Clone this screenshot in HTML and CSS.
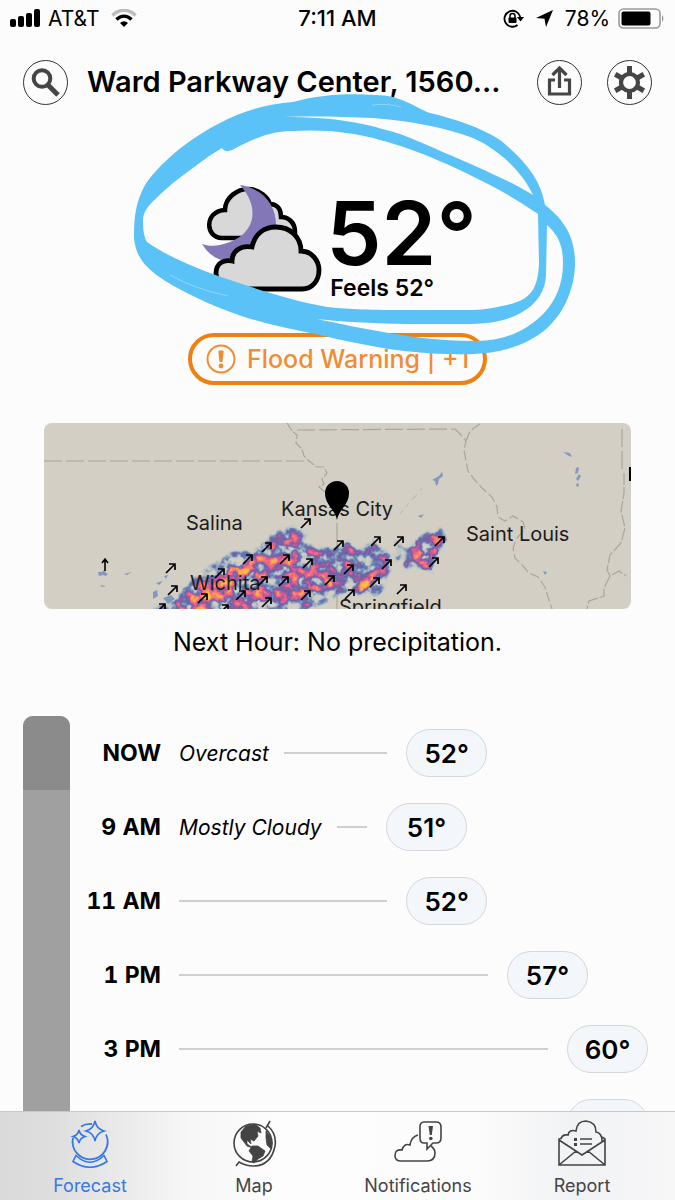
FILE: index.html
```html
<!DOCTYPE html>
<html lang="en">
<head>
<meta charset="utf-8">
<meta name="viewport" content="width=device-width, initial-scale=1">
<title>Forecast</title>
<link rel="stylesheet" href="styles.css">
</head>
<body>
<div class="app">
  <div class="status">
    <div class="status-side">
      <svg class="signal" width="30" height="18" viewBox="0 0 30 18" aria-hidden="true"><rect x="0" y="10" width="6" height="8" rx="2"/><rect x="8" y="7" width="6" height="11" rx="2"/><rect x="16" y="4" width="6" height="14" rx="2"/><rect x="24" y="0" width="6" height="18" rx="2"/></svg>
      <span>AT&amp;T</span>
      <svg class="wifi" width="26" height="18" viewBox="0 0 26 18" aria-hidden="true"><g fill="none" stroke-width="3.4"><path d="M1.5 6.5C8-.3 18-.3 24.500 6.500" stroke="#bbb"/><path d="M5.500 10.500C10 6 16 6 20.500 10.500" stroke="#000"/></g><path d="M9 14Q13 10.500 17 14L13 18Z"/></svg>
    </div>
    <span class="clock">7:11 AM</span>
    <div class="status-side status-right">
      <svg width="21" height="19" viewBox="0 0 21 19" aria-hidden="true"><path d="M14.500 16A8 8 0 1 1 17.300 8" fill="none" stroke="#000" stroke-width="1.800"/><path d="M14 8h7l-3.500 4.500z"/><rect x="5.500" y="8.500" width="8" height="5.500" rx="1"/><path d="M7 9V7a2.500 2.500 0 0 1 5 0v2" fill="none" stroke="#000" stroke-width="1.500"/></svg>
      <svg class="arrow" width="17" height="17" viewBox="0 0 17 17" aria-hidden="true"><path d="M17 0 10 17 8.500 8.800 0 8Z"/></svg>
      <span>78%</span>
      <svg class="battery" width="47" height="21" viewBox="0 0 47 21" aria-hidden="true"><rect x="1" y="1" width="41" height="19" rx="4.500" fill="none" stroke="#999" stroke-width="1.600"/><rect x="3.500" y="3.500" width="29" height="14" rx="2"/><path d="M44 7q3 3.500 0 7z" fill="#999"/></svg>
    </div>
  </div>

  <header class="header">
    <button class="round" aria-label="Search"><svg viewBox="1 1 43 43"><circle cx="19" cy="18.500" r="8.300"/><path d="m25 25 10 10" stroke-width="5"/></svg></button>
    <h1 class="place">Ward Parkway Center, 1560...</h1>
    <div class="actions">
      <button class="round" aria-label="Share"><svg viewBox="1 1 43 43"><path d="M18 20h-5.500v14h20V20H27M22.500 28V8.500M15.500 15l7-7 7 7" stroke-width="3.200"/></svg></button>
      <button class="round" aria-label="Settings"><svg viewBox="1 1 43 43"><circle cx="22.500" cy="22.500" r="8.500" stroke-width="4.200"/><g stroke-width="5"><path d="M22.500 6v7M22.500 32v7"/><path d="M22.500 6v7M22.500 32v7" transform="rotate(60 22.500 22.500)"/><path d="M22.500 6v7M22.500 32v7" transform="rotate(120 22.500 22.500)"/></g></svg></button>
    </div>
  </header>

  <main class="content">
    <section class="current">
      <div class="conditions">
        <svg class="weather" width="128" height="112" viewBox="200 182 128 112" role="img" aria-label="Cloudy night">
          <path d="M297 238H224C207 238 206 211 227 210C227 197 240 189 250 189C262 189 270 198 272 204C280 204 283 210 283 217C290 217 297 222 297 232Z" fill="#d8d8d8" stroke="#000" stroke-width="4.500"/>
          <path d="M242 185C268 189 279 208 278 228C277 250 258 263 238 263C220 262 210 254 204 244C212 247 222 246 232 242C259 231 261 206 242 185Z" fill="#8377b7"/>
          <path d="M233 289C222 289 218 280 218 273C218 264 225 259 234 261C234 251 243 245 254 247C257 234 266 227 278 227C292 227 303 237 303 251C314 251 321 261 321 270C321 281 314 289 304 289Z" fill="#d8d8d8" stroke="#000" stroke-width="4.800"/>
        </svg>
        <div class="temps">
          <div class="temp">52°</div>
          <div class="feels">Feels 52°</div>
        </div>
      </div>
      <button class="alert">
        <svg width="30" height="30" viewBox="0 0 30 30" aria-hidden="true"><circle cx="15" cy="15" r="13.500" fill="none" stroke="currentColor" stroke-width="2"/><path d="M12.300 7Q15 5.500 17.700 7L16.500 18h-3z" fill="currentColor"/><circle cx="15" cy="22" r="2.400" fill="currentColor"/></svg>
        <span>Flood Warning | +1</span>
      </button>
      <svg class="scribble" width="480" height="270" viewBox="98 90 480 270" aria-hidden="true">
        <path fill-rule="evenodd" fill="#5ac2f7" d="M430 113C415 108 402 95 375 95C345 93 318 95 293 102C225 106 165 155 145 185C136 202 134 215 134 238C136 262 152 275 187 293C235 318 275 326 320 335C365 346 410 354 453 354C505 356 530 342 545 330C566 312 575 285 575 263C575 240 567 222 545 205C541 180 525 160 500 140C480 127 455 119 430 113Z
        M143 222C143 210 148 205 173 183C190 170 205 158 222 148Q225 153 232 150C260 135 275 131 293 131C320 129 355 132 380 140C425 152 460 170 490 185Q515 198 538 214L539 263C538 290 530 300 507 305C490 309 480 310 470 310L403 310C365 310 345 309 327 307C290 300 260 290 230 280C200 270 170 258 147 242Q143 236 143 222Z
        M547 225C558 235 563 245 563 263C563 285 555 301 545 312C525 333 500 342 473 341C420 341 365 329 317 319C370 325 430 324 470 324C515 324 545 305 546 275Z
        M283 117C320 116 345 117 373 118C410 121 440 126 473 138C500 150 523 173 533 195C510 181 480 168 450 155C420 142 405 135 390 131C365 124 340 117 283 117Z"/>
        <path d="M170 275Q195 289 228 296M372 105Q388 103 401 107" fill="none" stroke="#8fd6fb" stroke-width="1"/>
      </svg>
    </section>

    <section class="radar">
      <svg class="map" viewBox="0 0 587 186" preserveAspectRatio="xMidYMid slice" role="img" aria-label="Radar map">
        <defs>
          <filter id="precip" x="0" y="0" width="587" height="186" filterUnits="userSpaceOnUse" color-interpolation-filters="sRGB">
            <feGaussianBlur in="SourceGraphic" stdDeviation="2.500" result="base"/>
            <feTurbulence type="fractalNoise" baseFrequency="0.09" numOctaves="3" seed="8"/>
            <feColorMatrix values="1 0 0 0 0 1 0 0 0 0 1 0 0 0 0 0 0 0 0 1" result="noise"/>
            <feComposite in="base" in2="noise" operator="arithmetic" k1="2.300" k2="-0.270" k3="0" k4="0"/>
            <feColorMatrix values="1 0 0 0 0 0 1 0 0 0 0 0 1 0 0 1 0 0 0 0"/>
            <feComponentTransfer>
              <feFuncR type="table" tableValues=".7 .7 .7 .58 .38 .42 .68 .92 .96 .98 .98"/>
              <feFuncG type="table" tableValues=".75 .75 .75 .66 .5 .38 .35 .38 .5 .68 .75"/>
              <feFuncB type="table" tableValues=".78 .78 .78 .76 .72 .65 .62 .54 .42 .28 .25"/>
              <feFuncA type="table" tableValues="0 0 .15 .55 .9 1 1 1 1 1 1"/>
            </feComponentTransfer>
          </filter>
        </defs>
        <rect width="587" height="186" fill="#d3cfc4"/>
        <g fill="none" stroke="#aaa69c" stroke-width="1.200">
          <path d="M0 38H265M253 7L411 6M578 6V50" stroke-dasharray="18 4"/>
          <path d="M243 0 248 8 253 12 252 20 258 26 260 33 265 38 273 44 280 44 283 50 278 56 280 61 275 64 282 70 290 80" stroke-dasharray="9 2"/>
          <path d="M293 100V186"/>
          <path d="M411 6 416 11 422 18 420 27 422 38 424 48 430 56 438 65 448 74 453 84 454 94 461 98 469 93 479 99 481 106 473 115 469 125 471 135 479 143 485 150 494 154 501 164 504 174 508 186M422 18 426 8 437 0" stroke-dasharray="10 3"/>
          <path d="M580 50 580 70 577 88 581 105 577 120 566 132 563 147 566 153 575 148 582 153M566 153 560 165 560 173 545 178 543 186" stroke-dasharray="12 2"/>
        </g>
        <g filter="url(#precip)">
          <path d="M0 0H587V186H0Z" fill="#000"/>
          <path d="M96 192 128 176 146 158 165 143 188 129 212 125 230 108 251 100 264 108 268 123 290 125 305 116 313 128 330 114 340 128 352 116 362 128 345 150 340 168 330 176 300 170 285 179 250 192Z" fill="#7c7c7c"/>
          <path d="M118 190 144 169 168 151 189 135 220 130 240 118 252 121 259 140 272 143 292 136 315 152 330 151 335 164 305 164 277 164 254 173 242 190Z" fill="#969696"/>
          <path d="M133 190 155 171 180 146 200 134 204 149 187 165 174 190Z" fill="#b8b8b8"/>
          <path d="M235 119 251 118 253 132 244 131ZM264 166 283 158 287 163 270 173ZM304 158 330 150 334 166 310 167Z" fill="#c0c0c0"/>
          <path d="M357 145 364 125 374 113 398 103 404 117 391 135 390 153 376 146Z" fill="#808080"/>
          <path d="M370 131 386 124 392 131 384 147 373 141Z" fill="#bcbcbc"/>
        </g>
        <g fill="#6687b9" opacity=".75">
          <path d="M54 149h4l2-2 2 3 2 1-2 2-3-1-4 1zM56 162l6 1-4 1zM80 151l8-2-5 3zM112 160l7-2-4 4zM120 153l4-1-2 4zM109 169l4-2 1 6-5 3zM119 175l8-3 4 4-7 5z"/>
          <path d="M388 57l7-4 3-4 1 4-4 3-1 5-2 2-1-5zM519 29l7 1 2 4-3-1zM532 45l3-1-1 6-3 1zM535 51l2 2-3 5-2-2zM533 60l2 1-1 3-2-1zM374 93l6-2-3 4zM499 148l4 1-2 3z"/>
          <path d="m356 91 14-17M370 75l8-10" stroke="#9daebc" stroke-width="1" stroke-dasharray="5 4"/>
        </g>
        <g class="city">
          <text x="142" y="107">Salina</text><text x="237" y="93">Kansas City</text><text x="146" y="167">Wichita</text><text x="422" y="118">Saint Louis</text><text x="295" y="191">Springfield</text>
        </g>
        <defs><path id="wind" d="M-5 5 4-4M-2-4H4V2" fill="none" stroke="#000" stroke-width="1.700"/></defs>
        <g>
          <use href="#wind" x="262" y="100"/><use href="#wind" x="223" y="124"/><use href="#wind" x="204" y="136"/><use href="#wind" x="241" y="136"/><use href="#wind" x="264" y="140"/><use href="#wind" x="127" y="145"/><use href="#wind" x="176" y="150"/><use href="#wind" x="129" y="167"/><use href="#wind" x="159" y="175"/><use href="#wind" x="197" y="172"/><use href="#wind" x="219" y="158"/><use href="#wind" x="240" y="158"/><use href="#wind" x="286" y="157"/><use href="#wind" x="262" y="172"/><use href="#wind" x="223" y="179"/><use href="#wind" x="117" y="185"/><use href="#wind" x="180" y="186"/><use href="#wind" x="295" y="122"/><use href="#wind" x="332" y="118"/><use href="#wind" x="355" y="118"/><use href="#wind" x="396" y="118"/><use href="#wind" x="390" y="139"/><use href="#wind" x="343" y="141"/><use href="#wind" x="305" y="146"/><use href="#wind" x="331" y="159"/><use href="#wind" x="358" y="166"/><use href="#wind" x="306" y="171"/>
          <path d="M61 148v-11M58 140l3-4 3 4" fill="none" stroke="#000" stroke-width="1.600"/>
          <path d="M293 97C291 86 281 82 281 70A12 12 0 0 1 305 70C305 82 295 86 293 97Z"/>
          <path d="M585 44h2v14h-2z"/>
        </g>
      </svg>
      <p class="next-hour">Next Hour: No precipitation.</p>
    </section>

    <section class="timeline">
      <div class="sky"><div class="sky-now"></div></div>
      <ol class="hours">
        <li class="hour"><span class="time">NOW</span><div class="track" style="width:65.7%"><em>Overcast</em><i class="line"></i><b class="pill">52°</b></div></li>
        <li class="hour"><span class="time">9 AM</span><div class="track" style="width:61.4%"><em>Mostly Cloudy</em><i class="line"></i><b class="pill">51°</b></div></li>
        <li class="hour"><span class="time">11 AM</span><div class="track" style="width:65.7%"><i class="line"></i><b class="pill">52°</b></div></li>
        <li class="hour"><span class="time">1 PM</span><div class="track" style="width:87.2%"><i class="line"></i><b class="pill">57°</b></div></li>
        <li class="hour"><span class="time">3 PM</span><div class="track" style="width:100%"><i class="line"></i><b class="pill">60°</b></div></li>
        <li class="hour"><span class="time"></span><div class="track" style="width:100%"><i class="line"></i><b class="pill"></b></div></li>
      </ol>
    </section>
  </main>

  <nav class="tabs">
    <a class="tab active" href="#forecast" aria-current="page">
      <svg viewBox="0 0 48 48"><path d="M7 18A17.500 17.500 0 1 0 40 14.500M15 6.500Q20 3.500 26 4" stroke-width="1.800"/><path d="M29 1q1.500 8 9 10-7.500 2-9 10-1.500-8-9-10 7.500-2 9-10ZM13 10q1 5 6 6.500-5 1.500-6 6.500-1-5-6-6.500 5-1.500 6-6.500Z"/><path d="M10 35.500Q24 49 38 35.500L41 41.500Q24 53 7 41.500Z"/></svg>
      <span>Forecast</span>
    </a>
    <a class="tab" href="#map">
      <svg viewBox="0 0 48 48"><circle cx="23" cy="23" r="19"/><path d="M38 6Q47 14 45 26 41 46 23 46 16 46 9 42L6 46M36 8l4-7"/><path d="M11 12 16 6 25 4 30 8 31 13 27 11 28 16 24 21 20 19 21 24 17 20 17 24 23 28 17 26 11 18ZM22 26 28 26 35 31 33 36 28 39 24 43 22 42 23 36 19 31ZM36 11 40 16 42 23 41 29 37 25 36 18Z" fill="currentColor" stroke-width=".8"/></svg>
      <span>Map</span>
    </a>
    <a class="tab" href="#notifications">
      <svg viewBox="0 0 48 48"><path d="M24 15Q17 17 16 25 10 23 8 30 1 29 1 35.500 1 41 7 41H33Q41 41 41 33 41 29 37 26"/><path d="M30 2H42Q47 2 47 7V18Q47 23 42 23H39L33 29V23H30Q26 23 26 18V7Q26 2 30 2Z"/><path d="M34.500 6h4.500l-1.200 9h-2z" fill="currentColor" stroke="none"/><circle cx="36.800" cy="18.500" r="1.800" fill="currentColor" stroke="none"/></svg>
      <span>Notifications</span>
    </a>
    <a class="tab" href="#report">
      <svg viewBox="0 0 48 48"><path d="M4 18 1 19V45H47V19L44 17M1 20 24 35 47 20M1 45 18 31M47 45 30 31M3 19Q4 14 10 15 11 9 18 11 19 1 28 1 38 2 38 12 44 13 44 21M22 19H34M22 24H34"/><path d="M16 18h3v3h-3zM16 23h3v3h-3z" fill="currentColor" stroke="none"/></svg>
      <span>Report</span>
    </a>
  </nav>
</div>
</body>
</html>
```
FILE: styles.css
```css
* { box-sizing: border-box; }
body {
  margin: 0;
  background: #fcfcfc;
  color: #000;
  font-family: Inter, "Liberation Sans", sans-serif;
}
button { font: inherit; cursor: pointer; }

.app { display: flex; flex-direction: column; height: 100vh; overflow: hidden; }

.status {
  display: flex;
  align-items: center;
  height: 36px;
  padding: 0 10px;
  font-size: 21px;
  flex: none;
}
.status-side { display: flex; align-items: center; gap: 8px; flex: 1; }
.status-right { justify-content: flex-end; }
.wifi { margin-left: 4px; }
.arrow { margin: 0 4px; }
.clock { font-size: 22px; font-weight: 500; }

.header {
  display: flex;
  align-items: center;
  gap: 19px;
  height: 92px;
  padding: 0 23px;
  flex: none;
}
.place {
  flex: 1;
  margin: 0;
  font-size: 29px;
  font-weight: 600;
  line-height: 36px;
  white-space: nowrap;
}
.actions { display: flex; gap: 25px; }
.round {
  flex: none;
  width: 45px;
  height: 45px;
  padding: 0;
  border: 1px solid #333;
  border-radius: 50%;
  background: none;
}
.round svg {
  display: block;
  width: 100%;
  height: 100%;
  fill: none;
  stroke: #454545;
  stroke-width: 4px;
}

.content { flex: 1; min-height: 0; }

.current {
  position: relative;
  display: flex;
  flex-direction: column;
  align-items: center;
  gap: 32px;
  padding-top: 54px;
}
.conditions { display: flex; align-items: flex-start; height: 119px; }
.temps { display: flex; flex-direction: column; padding-top: 5px; }
.temp { font-size: 88px; font-weight: 600; line-height: 92px; }
.feels { padding-left: 4px; font-size: 23px; font-weight: 600; line-height: 18px; }
.alert {
  display: flex;
  align-items: center;
  gap: 11px;
  height: 52px;
  padding: 0 14px;
  border: 4px solid #ef8013;
  border-radius: 26px;
  background: none;
  color: #f08c32;
  font-size: 25px;
  font-weight: 500;
  white-space: nowrap;
}
.scribble {
  position: absolute;
  top: -38px;
  left: 0;
  right: 0;
  margin: 0 auto;
  pointer-events: none;
}

.radar { padding: 38px 44px 0; }
.map { display: block; width: 100%; height: 186px; border-radius: 8px; }
.city { font-size: 20px; fill: #1c1c1c; }
.next-hour {
  margin: 16px 0 0;
  font-size: 25px;
  line-height: 34px;
  text-align: center;
}

.timeline { display: flex; padding: 57px 27px 0 23px; }
.sky {
  flex: none;
  width: 47px;
  border-radius: 10px 10px 0 0;
  overflow: hidden;
  background: #a0a0a0;
}
.sky-now { height: 74px; background: #8b8b8b; }
.hours { flex: 1; margin: 0; padding: 0; list-style: none; }
.hour {
  display: grid;
  grid-template-columns: 91px 1fr;
  column-gap: 18px;
  align-items: center;
  height: 74px;
}
.time {
  font-size: 23px;
  font-weight: 700;
  font-variant-numeric: tabular-nums;
  text-align: right;
}
.track { display: flex; align-items: center; }
.track em { margin-right: 15px; font-size: 21px; white-space: nowrap; }
.line { flex: 1; height: 2px; background: #cfcfcf; }
.pill {
  display: flex;
  align-items: center;
  justify-content: center;
  width: 81px;
  height: 48px;
  margin-left: 19px;
  border: 1px solid #d5d7da;
  border-radius: 24px;
  background: #f3f7fb;
  font-size: 26px;
  font-weight: 600;
}

.tabs {
  position: relative;
  display: flex;
  flex: none;
  height: 89px;
  padding: 8px 11px 0 8px;
  border-top: 1px solid #c8c8c8;
  background: linear-gradient(90deg, #dadada 0, #dedede 8%, #f7f7f7 28%, #fdfdfd 42%, #fcfcfc 70%, #f1f2f4 85%, #f7f7f8 100%);
}
.tab {
  display: flex;
  flex: 1;
  flex-direction: column;
  align-items: center;
  gap: 6px;
  color: #444;
  font-size: 18px;
  line-height: 24px;
  text-decoration: none;
}
.tab svg {
  width: 48px;
  height: 48px;
  fill: none;
  stroke: currentColor;
  stroke-width: 1.6px;
}
.active { color: #3478e5; }
```
